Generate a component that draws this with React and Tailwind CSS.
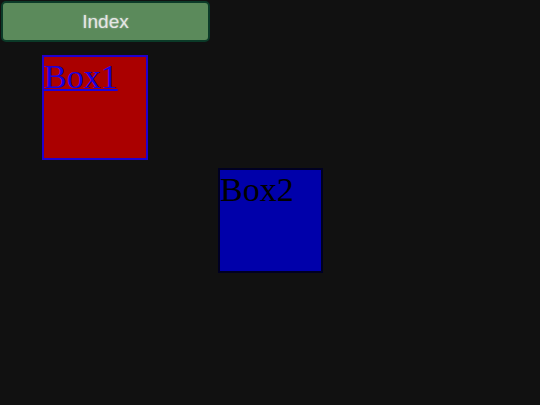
export default function App() {
  return (
    <div className="relative w-[540px] h-[405px] bg-[#111111] overflow-hidden">
      <div className="pt-px pl-px">
        <button className="w-[209px] h-[41px] rounded-[5px] border-2 border-[#0b3a28] bg-[#5b8a5b] text-[#e6e6e6] text-[19px] leading-none" style={{ fontFamily: '"Liberation Sans", Arial, sans-serif', textShadow: '0 0 2px rgba(255,255,255,0.5)' }}>
          Index
        </button>
      </div>
      <div className="absolute left-[42px] top-[55px] w-[106px] h-[105px] bg-[#aa0000] border-2 border-[#2200cc]">
        <a href="#" className="text-[#1a00dd] underline decoration-2 text-[34px] leading-[39px] block" style={{ fontFamily: '"Liberation Serif", "Times New Roman", serif' }}>
          Box1
        </a>
      </div>
      <div className="absolute left-[218px] top-[168px] w-[105px] h-[105px] bg-[#0000aa] border-2 border-[#000022]">
        <span className="text-black text-[34px] leading-[39px] block" style={{ fontFamily: '"Liberation Serif", "Times New Roman", serif' }}>
          Box2
        </span>
      </div>
    </div>
  );
}
